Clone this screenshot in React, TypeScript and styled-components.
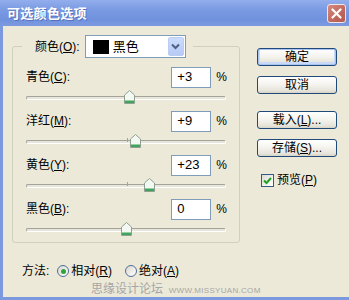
import React from "react";
import styled, { createGlobalStyle, css } from "styled-components";

interface Channel {
  name: string;
  hotkey: string;
  value: number;
}

const channels: Channel[] = [
  { name: "青色", hotkey: "C", value: 3 },
  { name: "洋红", hotkey: "M", value: 9 },
  { name: "黄色", hotkey: "Y", value: 23 },
  { name: "黑色", hotkey: "B", value: 0 },
];

const fmt = (v: number) => (v > 0 ? `+${v}` : `${v}`);

const GlobalStyle = createGlobalStyle`
  html, body {
    margin: 0;
    padding: 0;
    background: #ece9d8;
  }
  body {
    font-family: "Liberation Sans", "Noto Sans CJK SC", sans-serif;
    font-size: 12px;
    line-height: 14px;
    color: #000;
  }
`;

const App = () => {
  return (
    <>
      <GlobalStyle />
      <Window>
        <TitleBar>
          <Title>可选颜色选项</Title>
          <CloseButton>
            <svg width="11" height="11" viewBox="0 0 11 11">
              <path d="M1.5 1.5 L9.5 9.5 M9.5 1.5 L1.5 9.5" stroke="#fff" strokeWidth="2.2" strokeLinecap="round" />
            </svg>
          </CloseButton>
        </TitleBar>
        <Body>
          <Main>
            <Group>
              <Legend>
                <span>
                  颜色(<u>O</u>):
                </span>
                <Select>
                  <Swatch />
                  <span>黑色</span>
                  <Arrow>
                    <svg width="9" height="7" viewBox="0 0 9 7">
                      <path d="M1 1.5 L4.5 5 L8 1.5" stroke="#4d6185" strokeWidth="2" fill="none" />
                    </svg>
                  </Arrow>
                </Select>
              </Legend>
              <Rows>
                {channels.map((c) => (
                  <React.Fragment key={c.hotkey}>
                    <Row>
                      <Label>
                        {c.name}(<u>{c.hotkey}</u>):
                      </Label>
                      <ValueBox>{fmt(c.value)}</ValueBox>
                      <Pct>%</Pct>
                    </Row>
                    <Slider>
                      <Track />
                      <Tick />
                      <Thumb style={{ left: 100 + c.value - 5 }}>
                        <svg width="11" height="14" viewBox="0 0 11 14">
                          <path d="M0.5 5 L5.5 0.5 L10.5 5 V13.5 H0.5 Z" fill="#f4f8f3" stroke="#8fa093" />
                          <rect x="1" y="10.5" width="9" height="2.5" fill="#3fa45c" />
                        </svg>
                      </Thumb>
                    </Slider>
                  </React.Fragment>
                ))}
              </Rows>
            </Group>
            <Side>
              <Button $primary>确定</Button>
              <Button>取消</Button>
              <Button $spaced>
                载入(<u>L</u>)...
              </Button>
              <Button>
                存储(<u>S</u>)...
              </Button>
              <Check>
                <CheckBox>
                  <svg width="9" height="9" viewBox="0 0 9 9">
                    <path d="M1 4.5 L3.5 7 L8 2" stroke="#21a121" strokeWidth="2" fill="none" />
                  </svg>
                </CheckBox>
                <span>
                  预览(<u>P</u>)
                </span>
              </Check>
            </Side>
          </Main>
          <Method>
            <span>方法:</span>
            <Radio>
              <RadioDot $on />
              <span>
                相对(<u>R</u>)
              </span>
            </Radio>
            <Radio>
              <RadioDot $on={false} />
              <span>
                绝对(<u>A</u>)
              </span>
            </Radio>
          </Method>
          <Watermark>
            思缘设计论坛 <small>WWW.MISSYUAN.COM</small>
          </Watermark>
        </Body>
      </Window>
    </>
  );
};

const Window = styled.div`
  width: 349px;
  height: 300px;
  display: flex;
  flex-direction: column;
  overflow: hidden;
`;

const TitleBar = styled.div`
  height: 26px;
  flex: none;
  display: flex;
  align-items: center;
  justify-content: space-between;
  padding: 0 3px 0 7px;
  background: linear-gradient(#93aeec, #7b9be3 35%, #7091dd 75%, #7c9ae0);
`;

const Title = styled.span`
  color: #fff;
  font-family: "Noto Sans CJK SC", sans-serif;
  font-weight: bold;
  font-size: 13px;
  letter-spacing: 0.3px;
  text-shadow: 1px 1px 0 rgba(50, 70, 140, 0.45);
`;

const CloseButton = styled.div`
  width: 19px;
  height: 19px;
  box-sizing: border-box;
  border: 1px solid #f2e6e6;
  border-radius: 3px;
  background: linear-gradient(135deg, #d58b80, #c0675c 60%, #b45a52);
  display: flex;
  align-items: center;
  justify-content: center;
`;

const Body = styled.div`
  flex: 1;
  position: relative;
  display: flex;
  flex-direction: column;
  border-left: 3px solid #7d99de;
  border-bottom: 3px solid #7d99de;
  padding: 9px 0 0 9px;
`;

const Main = styled.div`
  display: flex;
  align-items: flex-start;
`;

const Group = styled.fieldset`
  margin: 0;
  min-width: 0;
  width: 228px;
  box-sizing: border-box;
  border: 1px solid #d0d0bf;
  border-radius: 3px;
  padding: 0 0 0 13px;
`;

const Legend = styled.legend`
  display: flex;
  align-items: center;
  gap: 5px;
  margin-left: -4px;
  padding: 0 7px 0 13px;
`;

const Select = styled.div`
  width: 101px;
  height: 23px;
  box-sizing: border-box;
  border: 1px solid #7f9db9;
  background: #fff;
  display: flex;
  align-items: center;
  gap: 4px;
  padding: 0 1px 0 7px;
  font-size: 13px;
`;

const Swatch = styled.span`
  width: 16px;
  height: 14px;
  background: #000;
`;

const Arrow = styled.span`
  margin-left: auto;
  width: 16px;
  height: 19px;
  box-sizing: border-box;
  border: 1px solid #bccdf4;
  border-radius: 2px;
  background: linear-gradient(#cddcfc, #b6caf7);
  display: flex;
  align-items: center;
  justify-content: center;
`;

const Rows = styled.div`
  margin-top: 8px;
  display: flex;
  flex-direction: column;
`;

const Row = styled.div`
  width: 201px;
  height: 22px;
  display: flex;
  align-items: center;
`;

const Label = styled.span`
  flex: 1;
`;

const ValueBox = styled.div`
  width: 40px;
  height: 21px;
  box-sizing: border-box;
  border: 1px solid #7f9db9;
  background: #fff;
  padding-left: 5px;
  display: flex;
  align-items: center;
  font-size: 13px;
`;

const Pct = styled.span`
  margin-left: 5px;
  font-size: 12px;
`;

const Slider = styled.div`
  position: relative;
  width: 200px;
  height: 22px;
`;

const Track = styled.div`
  position: absolute;
  left: 0;
  right: 0;
  top: 8px;
  height: 4px;
  box-sizing: border-box;
  border-radius: 2px;
  border: 1px solid;
  border-color: #a4a39b #fff #fff #a4a39b;
  background: #e8e6da;
`;

const Tick = styled.div`
  position: absolute;
  left: 101px;
  top: 6px;
  width: 1px;
  height: 4px;
  background: #a4a39b;
`;

const Thumb = styled.div`
  position: absolute;
  top: 2px;
  width: 11px;
  height: 14px;
  display: flex;
`;

const Side = styled.div`
  margin: 13px 0 0 17px;
  width: 80px;
  display: flex;
  flex-direction: column;
  gap: 10px;
`;

const Button = styled.button<{ $primary?: boolean; $spaced?: boolean }>`
  height: 18px;
  box-sizing: border-box;
  padding: 0;
  border: 1px solid #1f4a7a;
  border-radius: 3px;
  background: linear-gradient(#ffffff, #f5f4ef 45%, #e6e4da 85%, #d7d2c6);
  font: inherit;
  color: #000;
  ${(p) =>
    p.$primary &&
    css`
      box-shadow: inset 0 0 0 1px #a9c2ef, inset 0 -1px 0 2px #c9daf8;
    `}
  ${(p) =>
    p.$spaced &&
    css`
      margin-top: 7px;
    `}
`;

const Check = styled.label`
  margin: 6px 0 0 4px;
  display: flex;
  align-items: center;
  gap: 3px;
`;

const CheckBox = styled.span`
  width: 13px;
  height: 13px;
  box-sizing: border-box;
  border: 1px solid #345b87;
  background: linear-gradient(135deg, #dcdcd4, #fff);
  display: flex;
  align-items: center;
  justify-content: center;
`;

const Method = styled.div`
  margin: 20px 0 0 10px;
  height: 16px;
  display: flex;
  align-items: center;
  gap: 8px;
`;

const Radio = styled.label`
  display: flex;
  align-items: center;
  gap: 2px;
  margin-right: 5px;
`;

const RadioDot = styled.span<{ $on: boolean }>`
  width: 12px;
  height: 12px;
  box-sizing: border-box;
  border-radius: 50%;
  border: 1px solid #4f7099;
  background: linear-gradient(135deg, #d9d8cf, #fff);
  display: flex;
  align-items: center;
  justify-content: center;
  &::after {
    content: "";
    width: 5px;
    height: 5px;
    border-radius: 50%;
    background: ${(p) => (p.$on ? "#2fa53a" : "transparent")};
  }
`;

const Watermark = styled.div`
  position: absolute;
  left: 88px;
  top: 256px;
  color: #a6a6a6;
  font-family: "Noto Sans CJK SC", sans-serif;
  font-size: 12px;
  line-height: 12px;
  white-space: nowrap;
  small {
    font-family: "Liberation Sans", sans-serif;
    font-size: 8px;
    letter-spacing: 0.3px;
    margin-left: 3px;
  }
`;

export default App;
